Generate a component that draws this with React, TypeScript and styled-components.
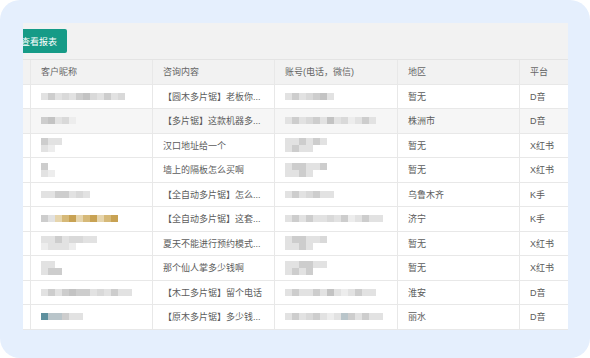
import styled, { createGlobalStyle } from 'styled-components';

// --- Global ---
const GlobalStyle = createGlobalStyle`
  html, body {
    margin: 0;
    padding: 0;
    background: #ffffff;
  }
  * {
    box-sizing: border-box;
  }
`;

// --- Data ---
type Row = {
  nick: string[];
  content: string;
  account: string[];
  region: string;
  platform: string;
  highlight?: boolean;
};

const shades: Record<string, string> = {
  a: '#d9d9d9',
  b: '#cdcdcd',
  c: '#e2e2e2',
  d: '#c3c3c3',
  e: '#ededed',
  g: '#c8a253',
  h: '#d6b978',
  i: '#e6d5ad',
  t: '#5e909e',
  s: '#b9c5ca',
};

const rows: Row[] = [
  { nick: ['cbcacbdacbca'], content: '【圆木多片锯】老板你...', account: ['cbcabdc'], region: '暂无', platform: 'D音' },
  { nick: ['bdcae'], content: '【多片锯】这款机器多...', account: ['cbcabcdcaecbc'], region: '株洲市', platform: 'D音', highlight: true },
  { nick: ['bcc', 'ce'], content: '汉口地址给一个', account: ['ccbcbc', 'cbcc'], region: '暂无', platform: 'X红书' },
  { nick: ['b', 'ce'], content: '墙上的隔板怎么买啊', account: ['cbbccb', 'ccbc'], region: '暂无', platform: 'X红书' },
  { nick: ['ccbbcac'], content: '【全自动多片锯】怎么...', account: ['cbcabcc'], region: '乌鲁木齐', platform: 'K手' },
  { nick: ['bcihgihgihg'], content: '【全自动多片锯】这套...', account: ['cbcbccacbecbcc'], region: '济宁', platform: 'K手' },
  { nick: ['ccbcaacc', 'eccce'], content: '夏天不能进行预约模式...', account: ['cbbcca', 'ccbc'], region: '暂无', platform: 'X红书' },
  { nick: ['cc', 'cbb'], content: '那个仙人掌多少钱啊', account: ['ccbbcc', 'cbcb'], region: '暂无', platform: 'X红书' },
  { nick: ['cbcbdbbcacbcc'], content: '【木工多片锯】留个电话', account: ['cbccbcdcecbcc'], region: '淮安', platform: 'D音' },
  { nick: ['tssbcc'], content: '【原木多片锯】多少钱...', account: ['cbcabcecsbcbcc'], region: '丽水', platform: 'D音' },
];

// --- Layout ---
const Frame = styled.div`
  width: 590px;
  height: 358px;
  border-radius: 20px;
  background: #e5effd;
  padding: 23px 0 0 23px;
  font-family: "Liberation Sans", "Noto Sans CJK SC", sans-serif;
`;

const Panel = styled.div`
  width: 545px;
  background: #ffffff;
  overflow: hidden;
`;

const Toolbar = styled.div`
  height: 37px;
  background: #f2f2f2;
  border-bottom: 1px solid #e4e4e4;
  padding-top: 6px;
`;

const Button = styled.div`
  display: inline-flex;
  align-items: center;
  height: 24px;
  margin-left: -12px;
  padding: 0 10px;
  background: #169b87;
  border-radius: 2px;
  color: #ffffff;
  font-size: 9px;
`;

const Grid = styled.div<{ $head?: boolean; $hl?: boolean }>`
  display: grid;
  grid-template-columns: 8px 122px 122px 123px 122px 48px;
  height: 24.5px;
  border-bottom: 1px solid #e8e8e8;
  background: ${({ $head, $hl }) => ($head ? '#f2f2f2' : $hl ? '#f6f6f6' : '#ffffff')};
`;

const Cell = styled.div<{ $head?: boolean }>`
  display: flex;
  align-items: center;
  padding-left: 10px;
  border-right: 1px solid #e8e8e8;
  font-size: 9px;
  color: ${({ $head }) => ($head ? '#666666' : '#5c5c5c')};
  white-space: nowrap;
  overflow: hidden;

  &:first-child {
    padding-left: 0;
  }
  &:last-child {
    border-right: none;
  }
`;

const Mosaic = styled.div`
  display: flex;
  flex-direction: column;
  filter: blur(0.5px);
`;

const MosaicRow = styled.div`
  display: flex;
`;

const Square = styled.span`
  width: 7px;
  height: 7px;
`;

function Blur({ pattern }: { pattern: string[] }) {
  return (
    <Mosaic>
      {pattern.map((line, r) => (
        <MosaicRow key={r}>
          {line.split('').map((ch, i) => (
            <Square key={i} style={{ background: shades[ch] || 'transparent' }} />
          ))}
        </MosaicRow>
      ))}
    </Mosaic>
  );
}

export default function App() {
  return (
    <>
      <GlobalStyle />
      <Frame>
        <Panel>
          <Toolbar>
            <Button>查看报表</Button>
          </Toolbar>
          <Grid $head>
            <Cell $head />
            <Cell $head>客户昵称</Cell>
            <Cell $head>咨询内容</Cell>
            <Cell $head>账号(电话，微信)</Cell>
            <Cell $head>地区</Cell>
            <Cell $head>平台</Cell>
          </Grid>
          {rows.map((row, idx) => (
            <Grid key={idx} $hl={row.highlight}>
              <Cell />
              <Cell><Blur pattern={row.nick} /></Cell>
              <Cell>{row.content}</Cell>
              <Cell><Blur pattern={row.account} /></Cell>
              <Cell>{row.region}</Cell>
              <Cell>{row.platform}</Cell>
            </Grid>
          ))}
        </Panel>
      </Frame>
    </>
  );
}
